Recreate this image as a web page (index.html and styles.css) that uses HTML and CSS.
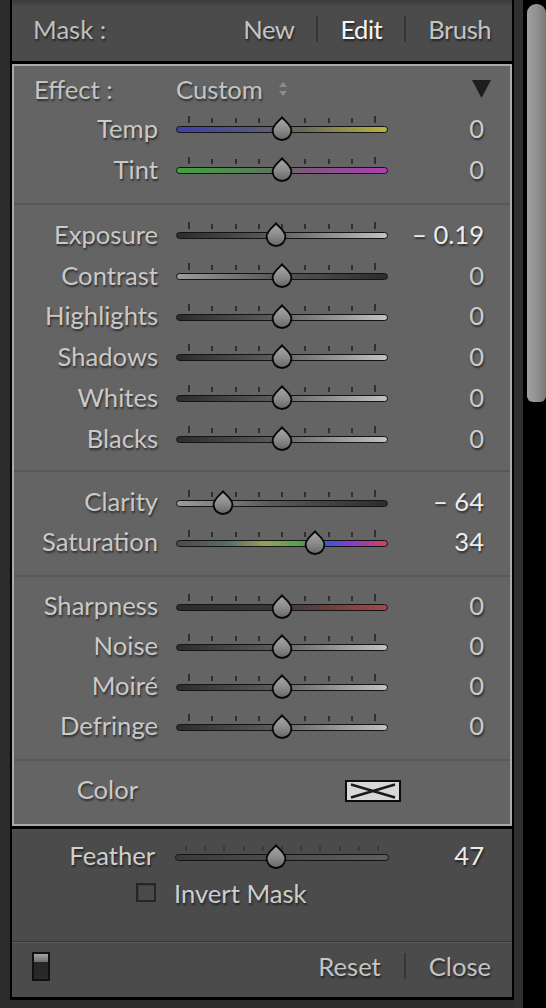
FILE: index.html
```html
<!DOCTYPE html>
<html>
<head>
<meta charset="utf-8">
<link rel="stylesheet" href="styles.css">
</head>
<body>
<div class="app">
  <svg class="defs" width="0" height="0" aria-hidden="true">
    <defs>
      <linearGradient id="tg" x1="0" y1="0" x2="0" y2="1">
        <stop offset="0" stop-color="#a9a9a9"/>
        <stop offset="0.55" stop-color="#8a8a8a"/>
        <stop offset="1" stop-color="#666"/>
      </linearGradient>
      <symbol id="drop" viewBox="0 0 22 25">
        <path d="M11 1.2 C12.6 4.2 20.4 8.6 20.4 14.6 A9.4 9.4 0 0 1 1.6 14.6 C1.6 8.6 9.4 4.2 11 1.2 Z" fill="url(#tg)" stroke="#080808" stroke-width="1.9" stroke-linejoin="round"/>
      </symbol>
    </defs>
  </svg>
  <div class="gutter-l"></div>
  <div class="panel">
    <div class="header">
      <span class="hlabel">Mask :</span>
      <nav class="modes">
        <span>New</span><i class="vsep"></i><span class="on">Edit</span><i class="vsep"></i><span>Brush</span>
      </nav>
    </div>

    <div class="inner">
      <section class="sec sec1">
        <div class="effect-row">
          <span class="effect-label">Effect :</span>
          <span class="effect-val">Custom</span>
          <svg class="updown" width="10" height="16" viewBox="0 0 10 16"><polygon points="5,1 9,6 1,6" fill="#8d8d8d"/><polygon points="1,10 9,10 5,15" fill="#8d8d8d"/></svg>
          <svg class="collapse" width="19" height="18" viewBox="0 0 19 18"><polygon points="0,0 19,0 9.5,18" fill="#1d1d1d"/></svg>
        </div>
        <div class="row wide">
          <span class="label">Temp</span>
          <div class="slider"><div class="ticks"><i></i><i></i><i></i><i></i><i></i><i></i><i></i><i></i><i></i></div><div class="track tr-temp"></div><svg class="thumb" style="left:95px"><use href="#drop"/></svg></div>
          <span class="value">0</span>
        </div>
        <div class="row wide">
          <span class="label">Tint</span>
          <div class="slider"><div class="ticks"><i></i><i></i><i></i><i></i><i></i><i></i><i></i><i></i><i></i></div><div class="track tr-tint"></div><svg class="thumb" style="left:95px"><use href="#drop"/></svg></div>
          <span class="value">0</span>
        </div>
      </section>

      <section class="sec sec2">
        <div class="row wide">
          <span class="label">Exposure</span>
          <div class="slider"><div class="ticks"><i></i><i></i><i></i><i></i><i></i><i></i><i></i><i></i><i></i></div><div class="track tr-up"></div><svg class="thumb" style="left:89px"><use href="#drop"/></svg></div>
          <span class="value nz">– 0.19</span>
        </div>
        <div class="row wide">
          <span class="label">Contrast</span>
          <div class="slider"><div class="ticks"><i></i><i></i><i></i><i></i><i></i><i></i><i></i><i></i><i></i></div><div class="track tr-down"></div><svg class="thumb" style="left:95px"><use href="#drop"/></svg></div>
          <span class="value">0</span>
        </div>
        <div class="row wide">
          <span class="label">Highlights</span>
          <div class="slider"><div class="ticks"><i></i><i></i><i></i><i></i><i></i><i></i><i></i><i></i><i></i></div><div class="track tr-up"></div><svg class="thumb" style="left:95px"><use href="#drop"/></svg></div>
          <span class="value">0</span>
        </div>
        <div class="row wide">
          <span class="label">Shadows</span>
          <div class="slider"><div class="ticks"><i></i><i></i><i></i><i></i><i></i><i></i><i></i><i></i><i></i></div><div class="track tr-up"></div><svg class="thumb" style="left:95px"><use href="#drop"/></svg></div>
          <span class="value">0</span>
        </div>
        <div class="row wide">
          <span class="label">Whites</span>
          <div class="slider"><div class="ticks"><i></i><i></i><i></i><i></i><i></i><i></i><i></i><i></i><i></i></div><div class="track tr-up"></div><svg class="thumb" style="left:95px"><use href="#drop"/></svg></div>
          <span class="value">0</span>
        </div>
        <div class="row wide">
          <span class="label">Blacks</span>
          <div class="slider"><div class="ticks"><i></i><i></i><i></i><i></i><i></i><i></i><i></i><i></i><i></i></div><div class="track tr-up"></div><svg class="thumb" style="left:95px"><use href="#drop"/></svg></div>
          <span class="value">0</span>
        </div>
      </section>

      <section class="sec sec3">
        <div class="row">
          <span class="label">Clarity</span>
          <div class="slider"><div class="ticks"><i></i><i></i><i></i><i></i><i></i><i></i><i></i><i></i><i></i></div><div class="track tr-down"></div><svg class="thumb" style="left:36px"><use href="#drop"/></svg></div>
          <span class="value nz">– 64</span>
        </div>
        <div class="row">
          <span class="label">Saturation</span>
          <div class="slider"><div class="ticks"><i></i><i></i><i></i><i></i><i></i><i></i><i></i><i></i><i></i></div><div class="track tr-sat"></div><svg class="thumb" style="left:128px"><use href="#drop"/></svg></div>
          <span class="value nz">34</span>
        </div>
      </section>

      <section class="sec sec4">
        <div class="row">
          <span class="label">Sharpness</span>
          <div class="slider"><div class="ticks"><i></i><i></i><i></i><i></i><i></i><i></i><i></i><i></i><i></i></div><div class="track tr-sharp"></div><svg class="thumb" style="left:95px"><use href="#drop"/></svg></div>
          <span class="value">0</span>
        </div>
        <div class="row">
          <span class="label">Noise</span>
          <div class="slider"><div class="ticks"><i></i><i></i><i></i><i></i><i></i><i></i><i></i><i></i><i></i></div><div class="track tr-up"></div><svg class="thumb" style="left:95px"><use href="#drop"/></svg></div>
          <span class="value">0</span>
        </div>
        <div class="row">
          <span class="label">Moiré</span>
          <div class="slider"><div class="ticks"><i></i><i></i><i></i><i></i><i></i><i></i><i></i><i></i><i></i></div><div class="track tr-up"></div><svg class="thumb" style="left:95px"><use href="#drop"/></svg></div>
          <span class="value">0</span>
        </div>
        <div class="row">
          <span class="label">Defringe</span>
          <div class="slider"><div class="ticks"><i></i><i></i><i></i><i></i><i></i><i></i><i></i><i></i><i></i></div><div class="track tr-up"></div><svg class="thumb" style="left:95px"><use href="#drop"/></svg></div>
          <span class="value">0</span>
        </div>
      </section>

      <section class="sec sec5">
        <div class="color-row">
          <span class="label color-label">Color</span>
          <svg class="swatch" width="56" height="22" viewBox="0 0 56 22">
            <rect x="1" y="1" width="54" height="20" fill="#d7d7d7" stroke="#0c0c0c" stroke-width="2"/>
            <path d="M6 4.5 L50 17.5 M6 17.5 L50 4.5" stroke="#1a1a1a" stroke-width="2.6"/>
          </svg>
        </div>
      </section>
    </div>

    <div class="lower">
      <div class="row frow">
        <span class="label flabel">Feather</span>
        <div class="slider fslider"><div class="ticks fticks"><i></i><i></i><i></i><i></i><i></i><i></i><i></i><i></i><i></i><i></i><i></i></div><div class="track tr-feather"></div><svg class="thumb" style="left:90px"><use href="#drop"/></svg></div>
        <span class="value nz fvalue">47</span>
      </div>
      <div class="invert-row">
        <span class="checkbox"></span>
        <span class="invert-label">Invert Mask</span>
      </div>
    </div>

    <div class="bottombar">
      <span class="toggle"></span>
      <nav class="actions"><span>Reset</span><i class="vsep"></i><span>Close</span></nav>
    </div>
  </div>
  <div class="gutter-r"></div>
  <div class="scroll"><div class="scroll-thumb"></div></div>
</div>
</body>
</html>
```

FILE: styles.css
```css
* { box-sizing: border-box; }

body {
  margin: 0;
  background: #2b2b2b;
  font-family: Lato, "Open Sans", sans-serif;
  font-size: 25.6px;
  color: #c9c9c9;
  text-shadow: 1px 2px 2px rgba(0, 0, 0, 0.55);
}

.app {
  display: flex;
  align-items: flex-start;
  height: 1008px;
}

.defs { flex: none; }

.gutter-l { width: 10px; flex: none; align-self: stretch; }

.panel {
  width: 504px;
  flex: none;
  border: 2px solid #000;
  border-top: 0;
  border-bottom-width: 3px;
  background: #4b4b4b;
}

.header {
  height: 64px;
  border-bottom: 3px solid #000;
  display: flex;
  align-items: center;
  padding: 0 21px 3px;
  background: linear-gradient(#3a3a3a, #4b4b4b 7px);
}

.hlabel { color: #bfbfbf; }

.modes, .actions {
  margin-left: auto;
  display: flex;
  align-items: center;
  gap: 23px;
  color: #c4c4c4;
}

.modes { letter-spacing: -0.5px; gap: 22px; }

.modes .on { color: #f6f6f6; }

.vsep {
  width: 2px;
  height: 26px;
  background: #363636;
}

.inner {
  background: #646464;
  border: 2px solid #aaaaaa;
}

.sec + .sec { border-top: 2px solid #585858; }

.sec1 { padding: 12px 0 13.4px; }
.sec2 { padding: 9px 0 11.2px; }
.sec3 { padding: 10px 0 13px; }
.sec4 { padding: 9px 0 13px; }
.sec5 { padding: 11px 0 12px; }

.effect-row {
  height: 30px;
  display: flex;
  align-items: center;
  padding: 0 19px 9px 20px;
}

.effect-label { width: 142px; color: #c4c4c4; }
.effect-val { color: #c4c4c4; }
.updown { margin-left: 15px; }
.collapse { margin-left: auto; margin-top: 0; }

.row {
  display: flex;
  align-items: center;
  height: 40px;
}

.row.wide { height: 40.8px; }

.label {
  width: 144px;
  flex: none;
  text-align: right;
  padding-bottom: 1px;
}

.slider {
  position: relative;
  width: 212px;
  flex: none;
  align-self: stretch;
  margin-left: 18px;
  padding-top: 8px;
  display: flex;
  flex-direction: column;
}

.ticks {
  height: 7px;
  display: flex;
  justify-content: space-between;
  align-items: flex-end;
  padding: 0 12px;
}

.ticks i {
  width: 2px;
  height: 5px;
  background: #2f2f2f;
}

.ticks i:first-child,
.ticks i:last-child { height: 7px; }

.track {
  margin-top: 3px;
  height: 7px;
  border: 1.6px solid #141414;
  border-radius: 4px;
}

.tr-temp { background: linear-gradient(90deg, #3f3fae, #5a5a78 40%, #6a6a5a 60%, #b9b53c); }
.tr-tint { background: linear-gradient(90deg, #3da53d, #5a7a5a 40%, #7a5a7a 60%, #b03cb4); }
.tr-up { background: linear-gradient(90deg, #2c2c2c, #5a5a5a 45%, #c2c2c2); }
.tr-down { background: linear-gradient(90deg, #9c9c9c, #5a5a5a 45%, #2c2c2c); }
.tr-sat { background: linear-gradient(90deg, #4a4a4a, #5b6f6a 25%, #9aa24c 42%, #4aa84a 58%, #3e56d0 72%, #8a3cc8 84%, #d84050); }
.tr-sharp { background: linear-gradient(90deg, #2c2c2c, #3a3a3a 50%, #b04444); }
.tr-feather { background: linear-gradient(90deg, #3a3a3a, #505050 60%, #5e5e5e); }

.thumb {
  position: absolute;
  top: 8px;
  width: 22px;
  height: 25px;
  overflow: visible;
}

.value {
  width: 96px;
  flex: none;
  text-align: right;
  color: #cccccc;
  padding-bottom: 1px;
}

.value.nz { color: #ececec; }

.color-row {
  height: 40px;
  display: flex;
  align-items: center;
  padding-bottom: 5px;
}

.color-label { width: 124px; }
.swatch { margin-left: 207px; margin-top: 3px; }

.lower {
  border-top: 3px solid #000;
  padding: 7px 0 31px;
}

.flabel { width: 143px; color: #cfcfcf; }
.fslider { width: 214px; margin-left: 20px; }
.fticks { padding: 0 10px; }
.fticks i, .fticks i:first-child, .fticks i:last-child { height: 5px; background: #3a3a3a; }
.fvalue { width: 95px; }

.invert-row {
  height: 34px;
  display: flex;
  align-items: center;
  padding-left: 124px;
}

.checkbox {
  width: 20px;
  height: 19px;
  border: 2px solid #262626;
  background: #4a4a4a;
  box-shadow: inset 1px 1px 0 #3e3e3e;
}

.invert-label { margin-left: 18px; color: #cdcdcd; }

.bottombar {
  height: 56px;
  border-top: 1px solid #3a3a3a;
  box-shadow: inset 0 1px 0 #5a5a5a;
  display: flex;
  align-items: center;
  padding: 0 21px 6px 20px;
}

.toggle {
  width: 18px;
  height: 29px;
  border: 2px solid #111;
  background: linear-gradient(#a3a3a3, #6c6c6c 33%, #262626 34%, #2a2a2a);
}

.gutter-r {
  width: 9px;
  flex: none;
  align-self: stretch;
  background: #2f2f2f;
}

.scroll {
  width: 23px;
  flex: none;
  align-self: stretch;
  background: #000;
  padding: 4px 0 0 4px;
}

.scroll-thumb {
  width: 19px;
  height: 398px;
  border-radius: 9px 9px 6px 6px;
  background: linear-gradient(90deg, #a0a0a0, #939393 45%, #7a7a7a);
}
```
